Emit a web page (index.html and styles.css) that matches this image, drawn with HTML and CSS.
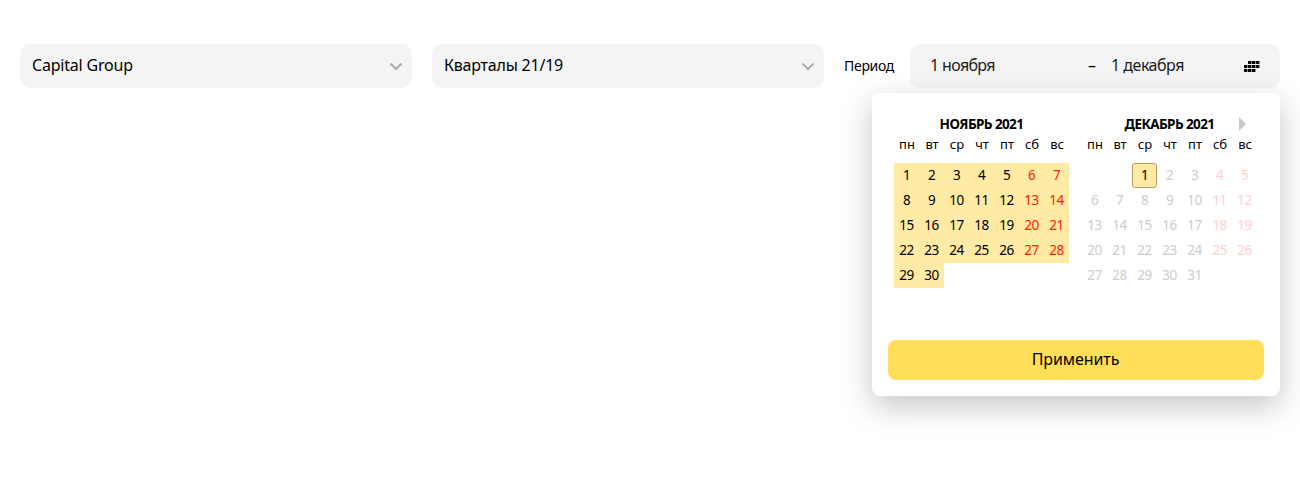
FILE: index.html
```html
<!DOCTYPE html>
<html lang="ru">
<head>
<meta charset="utf-8">
<title>Период</title>
<link rel="stylesheet" href="styles.css">
</head>
<body>
<div class="filters">
  <div class="select"><span class="group-name">Capital Group</span>
    <svg class="chevron" width="14" height="9" viewBox="0 0 14 9"><path d="M1.500 1.500 7 7l5.500-5.500" fill="none" stroke="#aaa" stroke-width="2"/></svg>
  </div>
  <div class="select"><span class="quarters">Кварталы 21/19</span>
    <svg class="chevron" width="14" height="9" viewBox="0 0 14 9"><path d="M1.500 1.500 7 7l5.500-5.500" fill="none" stroke="#aaa" stroke-width="2"/></svg>
  </div>
  <span class="label">Период</span>
  <div class="period">
    <span class="date from">1 ноября</span>
    <span class="dash">–</span>
    <span class="date to">1 декабря</span>
    <svg class="cal-icon" width="16" height="11" viewBox="0 0 16 11" shape-rendering="crispEdges"><path fill="#888" d="M4 0h12v3H4zM0 4h16v3H0zM0 8h12v3H0z"/><path d="M4 0h3v3H4zM8 0h3v3H8zM12 0h3v3h-3zM0 4h3v3H0zM4 4h3v3H4zM8 4h3v3H8zM12 4h3v3h-3zM0 8h3v3H0zM4 8h3v3H4zM8 8h3v3H8z"/></svg>
    <div class="popup">
      <div class="months">
        <section class="month">
          <h2 class="title november">НОЯБРЬ 2021</h2>
          <div class="week names"><span>пн</span><span>вт</span><span>ср</span><span>чт</span><span>пт</span><span>сб</span><span>вс</span></div>
          <div class="week picked"><span>1</span><span>2</span><span>3</span><span>4</span><span>5</span><span class="off">6</span><span class="off">7</span></div>
          <div class="week picked"><span>8</span><span>9</span><span>10</span><span>11</span><span>12</span><span class="off">13</span><span class="off">14</span></div>
          <div class="week picked"><span>15</span><span>16</span><span>17</span><span>18</span><span>19</span><span class="off">20</span><span class="off">21</span></div>
          <div class="week picked"><span>22</span><span>23</span><span>24</span><span>25</span><span>26</span><span class="off">27</span><span class="off">28</span></div>
          <div class="week picked"><span>29</span><span>30</span></div>
        </section>
        <section class="month">
          <h2 class="title december">ДЕКАБРЬ 2021</h2>
          <svg class="next" width="7" height="14" viewBox="0 0 7 14"><path d="M0 0l7 7-7 7z" fill="#c8c8c8"/></svg>
          <div class="week names"><span>пн</span><span>вт</span><span>ср</span><span>чт</span><span>пт</span><span>сб</span><span>вс</span></div>
          <div class="week future"><span></span><span></span><span class="today">1</span><span>2</span><span>3</span><span class="off">4</span><span class="off">5</span></div>
          <div class="week future"><span>6</span><span>7</span><span>8</span><span>9</span><span>10</span><span class="off">11</span><span class="off">12</span></div>
          <div class="week future"><span>13</span><span>14</span><span>15</span><span>16</span><span>17</span><span class="off">18</span><span class="off">19</span></div>
          <div class="week future"><span>20</span><span>21</span><span>22</span><span>23</span><span>24</span><span class="off">25</span><span class="off">26</span></div>
          <div class="week future"><span>27</span><span>28</span><span>29</span><span>30</span><span>31</span></div>
        </section>
      </div>
      <button class="apply">Применить</button>
    </div>
  </div>
</div>
</body>
</html>
```
FILE: styles.css
```css
* { box-sizing: border-box; }
body {
  margin: 0;
  min-height: 500px;
  background: #fff;
  color: #000;
  font-family: "Noto Sans", sans-serif;
  font-size: 16px;
}
.filters {
  display: flex;
  align-items: center;
  padding: 44px 20px 0;
}
.select {
  display: flex;
  align-items: center;
  justify-content: space-between;
  width: 392px;
  height: 44px;
  margin-right: 20px;
  padding: 0 9px 2px 12px;
  border-radius: 10px;
  background: #f4f4f4;
  white-space: nowrap;
}
.chevron { margin-top: 3px; }
.group-name { letter-spacing: -0.2px; }
.quarters { letter-spacing: -0.22px; }
.label {
  width: 66px;
  padding-bottom: 1px;
  font-size: 14px;
  letter-spacing: -0.3px;
  white-space: nowrap;
}
.period {
  position: relative;
  display: flex;
  align-items: center;
  width: 370px;
  height: 44px;
  padding: 0 20px 2px;
  border-radius: 10px;
  background: #f4f4f4;
  white-space: nowrap;
}
.date { letter-spacing: -0.65px; color: #1a1a1a; }
.from { width: 158px; }
.dash { width: 23px; }
.to { flex: 1; letter-spacing: -0.48px; }
.cal-icon { margin-top: 3px; }
.popup {
  position: absolute;
  top: 49px;
  right: 0;
  width: 408px;
  height: 303px;
  padding: 16px;
  border-radius: 8px;
  background: #fff;
  box-shadow: 0 10px 32px rgba(0, 0, 0, 0.23);
}
.months {
  display: flex;
  gap: 13px;
  height: 231px;
  padding-left: 6px;
}
.month { position: relative; width: 175px; }
.title {
  margin: 0;
  padding-top: 5px;
  height: 25px;
  font-size: 13.5px;
  line-height: 20px;
  font-weight: 700;
  text-align: center;
  letter-spacing: -0.6px;
}
.next { position: absolute; top: 8px; left: 157px; }
.week {
  display: grid;
  grid-template-columns: repeat(7, 25px);
  font-size: 13.5px;
  line-height: 25px;
  height: 25px;
  text-align: center;
}
.week span { height: 25px; letter-spacing: -0.5px; }
.names { height: 29px; font-size: 13px; line-height: 20px; }
.week.names span { padding-left: 1px; letter-spacing: 0; }
.picked span { background: #ffeba6; }
.picked .off { color: #f20; }
.future { color: #ccc; }
.future .off { color: #ffcfcf; }
.week .today {
  border: 1px solid #b8a05e;
  border-radius: 3px;
  background: #ffeba6;
  color: #000;
  line-height: 23px;
}
.apply {
  display: block;
  width: 376px;
  height: 40px;
  padding: 0 1px 2px 0;
  border: 0;
  border-radius: 8px;
  background: #ffde5a;
  color: #000;
  font: inherit;
  letter-spacing: -0.1px;
}
```
